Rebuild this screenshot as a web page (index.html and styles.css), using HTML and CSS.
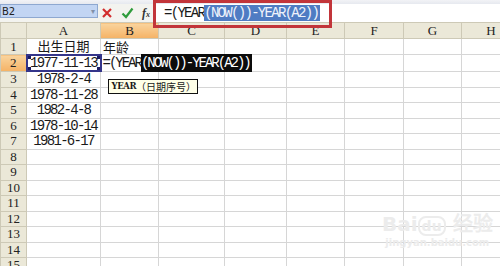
FILE: index.html
```html
<!DOCTYPE html>
<html lang="zh-CN">
<head>
    <meta charset="UTF-8">
    <title>YEAR 函数</title>
    <link rel="stylesheet" href="styles.css">
</head>
<body>
    <div class="topbar"></div>
    <div class="formula-bar">
        <div class="name-box"><span>B2</span><span class="arrow">&#9662;</span></div>
        <div class="edit-buttons">
            <svg width="12" height="12" viewBox="0 0 12 12"><path d="M2 2 L10 10 M10 2 L2 10" stroke="#d22d2d" stroke-width="2.2" fill="none"/></svg>
            <svg width="13" height="12" viewBox="0 0 13 12"><path d="M1.5 6.5 L5 10 L11.5 1.5" stroke="#2f9c3c" stroke-width="2.2" fill="none"/></svg>
            <span class="fx">f<small>x</small></span>
        </div>
        <div class="formula-input"><span>=(YEAR</span><span class="sel">(NOW())-YEAR(A2))</span></div>
    </div>
    <div class="callout"></div>

    <table class="sheet">
        <colgroup>
            <col class="c-row"><col class="c-a"><col class="c-b"><col class="c-c"><col class="c-d"><col class="c-e"><col class="c-f"><col class="c-g"><col class="c-h">
        </colgroup>
        <tr class="head"><th></th><th>A</th><th class="active">B</th><th>C</th><th>D</th><th>E</th><th>F</th><th>G</th><th>H</th></tr>
        <tr><th>1</th><td class="center cjk">出生日期</td><td class="cjk">年龄</td><td></td><td></td><td></td><td></td><td></td><td></td></tr>
        <tr><th class="active">2</th><td class="center ref">1977-11-13</td><td class="editing"><span class="edit-text">=(YEAR<span class="sel">(NOW())-YEAR(A2))</span></span><div class="tip"><b>YEAR</b>（日期序号）</div></td><td></td><td></td><td></td><td></td><td></td><td></td></tr>
        <tr><th>3</th><td class="center">1978-2-4</td><td></td><td></td><td></td><td></td><td></td><td></td><td></td></tr>
        <tr><th>4</th><td class="center">1978-11-28</td><td></td><td></td><td></td><td></td><td></td><td></td><td></td></tr>
        <tr><th>5</th><td class="center">1982-4-8</td><td></td><td></td><td></td><td></td><td></td><td></td><td></td></tr>
        <tr><th>6</th><td class="center">1978-10-14</td><td></td><td></td><td></td><td></td><td></td><td></td><td></td></tr>
        <tr><th>7</th><td class="center">1981-6-17</td><td></td><td></td><td></td><td></td><td></td><td></td><td></td></tr>
        <tr><th>8</th><td></td><td></td><td></td><td></td><td></td><td></td><td></td><td></td></tr>
        <tr><th>9</th><td></td><td></td><td></td><td></td><td></td><td></td><td></td><td></td></tr>
        <tr><th>10</th><td></td><td></td><td></td><td></td><td></td><td></td><td></td><td></td></tr>
        <tr><th>11</th><td></td><td></td><td></td><td></td><td></td><td></td><td></td><td></td></tr>
        <tr><th>12</th><td></td><td></td><td></td><td></td><td></td><td></td><td></td><td></td></tr>
        <tr><th>13</th><td></td><td></td><td></td><td></td><td></td><td></td><td></td><td></td></tr>
        <tr><th>14</th><td></td><td></td><td></td><td></td><td></td><td></td><td></td><td></td></tr>
        <tr><th>15</th><td></td><td></td><td></td><td></td><td></td><td></td><td></td><td></td></tr>
    </table>

    <!-- 水印 -->
    <div class="watermark">
        <div class="wm-logo">Bai<span>du</span> 经验</div>
        <div class="wm-url">jingyan.baidu.com</div>
    </div>
</body>
</html>
```

FILE: styles.css
```css
body {
    margin: 0;
    width: 500px;
    height: 266px;
    overflow: hidden;
    position: relative;
    background-color: #fff;
    font-family: "Liberation Mono", monospace;
    color: #1a1a1a;
}

.topbar {
    height: 4px;
    background: linear-gradient(#f2f3f6, #e6e9ef);
}

.formula-bar {
    display: flex;
    height: 18px;
    background-color: #f3f3ef;
}

.name-box {
    width: 95px;
    height: 12px;
    border: 1px solid #8ea8d0;
    background-color: #c2d5f3;
    display: flex;
    justify-content: space-between;
    align-items: center;
    padding: 0 0 0 1px;
    font-family: "DejaVu Sans", sans-serif;
    font-size: 10px;
    color: #222;
}

.name-box .arrow {
    font-size: 8px;
    color: #8190a8;
    margin-right: 2px;
}

.edit-buttons {
    width: 56px;
    display: flex;
    align-items: center;
    gap: 8px;
    padding-left: 3px;
    box-sizing: border-box;
}

.fx {
    font-family: "Liberation Serif", serif;
    font-style: italic;
    font-weight: bold;
    font-size: 12px;
    color: #333;
}

.fx small {
    font-size: 8px;
}

.formula-input {
    flex: 1;
    background-color: #fff;
    padding: 1px 0 0 10px;
    font-size: 14px;
    line-height: 16px;
    letter-spacing: -1.7px;
    white-space: nowrap;
}

.formula-input .sel {
    background-color: #4f7cc3;
    color: #eef3fb;
    padding-right: 2px;
}

.callout {
    position: absolute;
    left: 153px;
    top: 0;
    width: 173px;
    height: 22px;
    border: 3px solid #c2353a;
}

.sheet {
    border-collapse: collapse;
    table-layout: fixed;
    width: 520px;
}

.c-row { width: 26px; }
.c-a { width: 74px; }
.c-b { width: 58px; }
.c-c { width: 66px; }
.c-d { width: 62px; }
.c-e { width: 58px; }
.c-f { width: 59px; }
.c-g { width: 58px; }
.c-h { width: 59px; }

th, td {
    height: 14.5px;
    padding: 0;
    border: 1px solid #d6d6d6;
    font-size: 14px;
    line-height: 14px;
    letter-spacing: -1.7px;
    white-space: nowrap;
    overflow: visible;
    text-align: left;
}

th {
    background-color: #ebe8d8;
    border-color: #cdc9b6;
    font-family: "Liberation Serif", serif;
    font-weight: normal;
    font-size: 13px;
    letter-spacing: 0;
    text-align: center;
    color: #222;
}

.head th {
    height: 15px;
}

th.active {
    background: linear-gradient(#f9d49e, #f5b265);
}

.center {
    text-align: center;
}

.cjk {
    font-family: "Noto Sans CJK SC", sans-serif;
    font-size: 13px;
    letter-spacing: 0;
    padding-left: 2px;
}

.center.cjk {
    padding-left: 0;
}

.ref {
    border: 2px solid #34358a;
    background:
        linear-gradient(#1a1b62, #1a1b62) top left / 3px 3px no-repeat,
        linear-gradient(#1a1b62, #1a1b62) top right / 3px 3px no-repeat,
        linear-gradient(#1a1b62, #1a1b62) bottom left / 3px 3px no-repeat,
        linear-gradient(#1a1b62, #1a1b62) bottom right / 3px 3px no-repeat;
}

.editing {
    position: relative;
}

.edit-text {
    position: relative;
    z-index: 2;
    padding-left: 1px;
    letter-spacing: -2px;
    background-color: #fff;
}

.edit-text .sel {
    background-color: #0c0c0c;
    color: #fff;
    padding: 1px 2px 1px 0;
}

.tip {
    position: absolute;
    z-index: 3;
    left: 6px;
    top: 24px;
    height: 13px;
    display: flex;
    align-items: center;
    padding: 0 1px 0 3px;
    border: 1px solid #111;
    background-color: #ffffe8;
    font-family: "Noto Sans CJK SC", sans-serif;
    font-size: 10px;
    line-height: 13px;
    letter-spacing: 0;
}

.tip b {
    font-family: "DejaVu Serif", serif;
    font-size: 8.5px;
    letter-spacing: -0.4px;
}

.watermark {
    position: absolute;
    left: 382px;
    top: 208px;
    color: #ececec;
    font-family: "DejaVu Sans", sans-serif;
    text-align: center;
}

.wm-logo {
    font-size: 20px;
    font-weight: bold;
}

.wm-logo span {
    border: 2px solid #ececec;
    border-radius: 8px;
    font-size: 14px;
    padding: 0 2px;
}

.wm-url {
    font-size: 10px;
    font-weight: bold;
}
```
